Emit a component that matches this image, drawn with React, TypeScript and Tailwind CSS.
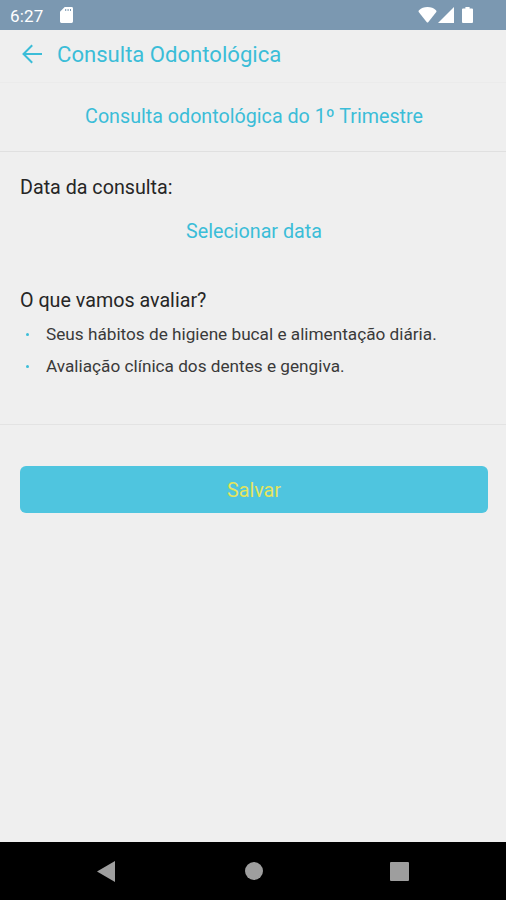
import { memo } from 'react';

/** Topics covered by the dental appointment */
const EVALUATION_ITEMS = [
  'Seus hábitos de higiene bucal e alimentação diária.',
  'Avaliação clínica dos dentes e gengiva.',
];

/**
 * @component
 * @description Android status bar with clock, SD card, wifi, signal and battery
 */
const StatusBar = memo(() => (
  <div className="flex h-[30px] shrink-0 items-center bg-[#7b98b1] pl-[10px] pr-[33px] text-white">
    <span className="w-[50px] whitespace-nowrap pt-0.5 text-[17px] leading-none tracking-[0.2px]">6:27</span>
    <svg className="h-4 w-[13px]" viewBox="0 0 13 16" fill="currentColor" aria-hidden="true">
      <path fillRule="evenodd" d="M4.7 0H11.6Q13 0 13 1.4V14.6Q13 16 11.6 16H1.4Q0 16 0 14.6V4.7ZM5.2 1.9V3.9H6.2V1.9ZM7.6 1.9V3.9H8.6V1.9ZM10 1.9V3.9H11V1.9Z" />
    </svg>
    <div className="ml-auto flex items-center">
      <svg className="h-4 w-[19px]" viewBox="0 0 19 16" fill="currentColor" aria-hidden="true">
        <path d="M10.2 15.2Q9.5 16 8.8 15.2L0.7 5Q0.2 4 1 3.2C3.4 1 6 0 9.5 0S15.6 1 18 3.2Q18.8 4 18.3 5Z" />
      </svg>
      <svg className="ml-px h-4 w-4" viewBox="0 0 16 16" fill="currentColor" aria-hidden="true">
        <path d="M0 16L16 0V16Z" />
      </svg>
      <svg className="ml-2 h-4 w-[11px]" viewBox="0 0 11 16" fill="currentColor" aria-hidden="true">
        <path d="M3.4 0H7.6V1.6H10Q11 1.6 11 2.6V15Q11 16 10 16H1Q0 16 0 15V2.6Q0 1.6 1 1.6H3.4Z" />
      </svg>
    </div>
  </div>
));

StatusBar.displayName = 'StatusBar';

/**
 * @component
 * @description Screen header with back button and title
 */
const Header = memo(() => (
  <header className="flex h-[53px] shrink-0 items-center border-b border-[#ebebeb] pb-[3px] pl-[22px] text-[#3bbdd8]">
    <button type="button" aria-label="Voltar" className="mr-[15px] pb-px">
      <svg className="h-5 w-5" viewBox="0 0 20 20" fill="none" stroke="currentColor" strokeWidth="2" aria-hidden="true">
        <path d="M20 10H1.8M10.2 1.2L1.5 10L10.2 18.8" />
      </svg>
    </button>
    <h1 className="whitespace-nowrap text-[22.1px] leading-none">Consulta Odontológica</h1>
  </header>
));

Header.displayName = 'Header';

/**
 * @component
 * @description Android navigation bar with back, home and recents
 */
const NavigationBar = memo(() => (
  <nav className="flex h-[58px] shrink-0 items-center justify-between bg-black pl-[97px] pr-[97px] text-[#9e9e9e]">
    <svg className="h-[21px] w-[18px]" viewBox="0 0 18 21" fill="currentColor" aria-hidden="true">
      <path d="M18 0V21L0 10.5Z" />
    </svg>
    <div className="ml-0.5 h-[18px] w-[18px] rounded-full bg-[#9e9e9e]" />
    <div className="h-[19px] w-[19px] rounded-[1px] bg-[#9e9e9e]" />
  </nav>
));

NavigationBar.displayName = 'NavigationBar';

export default function App() {
  return (
    <div className="flex h-[900px] w-[506px] flex-col overflow-hidden bg-[#efefef] font-[Roboto,sans-serif] text-[#262626]">
      <StatusBar />
      <Header />

      <main className="flex flex-1 flex-col">
        <div className="flex h-[69px] items-center justify-center border-b border-[#e0e0e0] pl-0.5">
          <h2 className="whitespace-nowrap text-[19.7px] leading-none text-[#3bbdd8]">
            Consulta odontológica do 1º Trimestre
          </h2>
        </div>

        <section className="h-[273px] border-b border-[#e3e3e3] px-5 pt-6">
          <h3 className="text-[19.7px] leading-6">Data da consulta:</h3>
          <button type="button" className="mt-5 block w-full pl-0.5 text-center text-[19.7px] leading-6 text-[#3bbdd8]">
            Selecionar data
          </button>

          <h3 className="mt-[45px] text-[19.7px] leading-6">O que vamos avaliar?</h3>
          <ul className="mt-[5px]">
            {EVALUATION_ITEMS.map((item) => (
              <li key={item} className="flex h-8 items-center pl-[6px]">
                <span className="mr-[17px] h-[3px] w-[3px] rounded-full bg-[#3bbdd8]" />
                <span className="whitespace-nowrap text-[17.2px] leading-6 text-[#3a3a3a]">{item}</span>
              </li>
            ))}
          </ul>
        </section>

        <div className="pl-5 pr-[18px] pt-[41px]">
          <button type="button" className="h-[47px] w-full rounded-md bg-[#4fc5df] pt-0.5 text-[19.7px] text-[#e4e45c]">
            Salvar
          </button>
        </div>
      </main>

      <NavigationBar />
    </div>
  );
}
